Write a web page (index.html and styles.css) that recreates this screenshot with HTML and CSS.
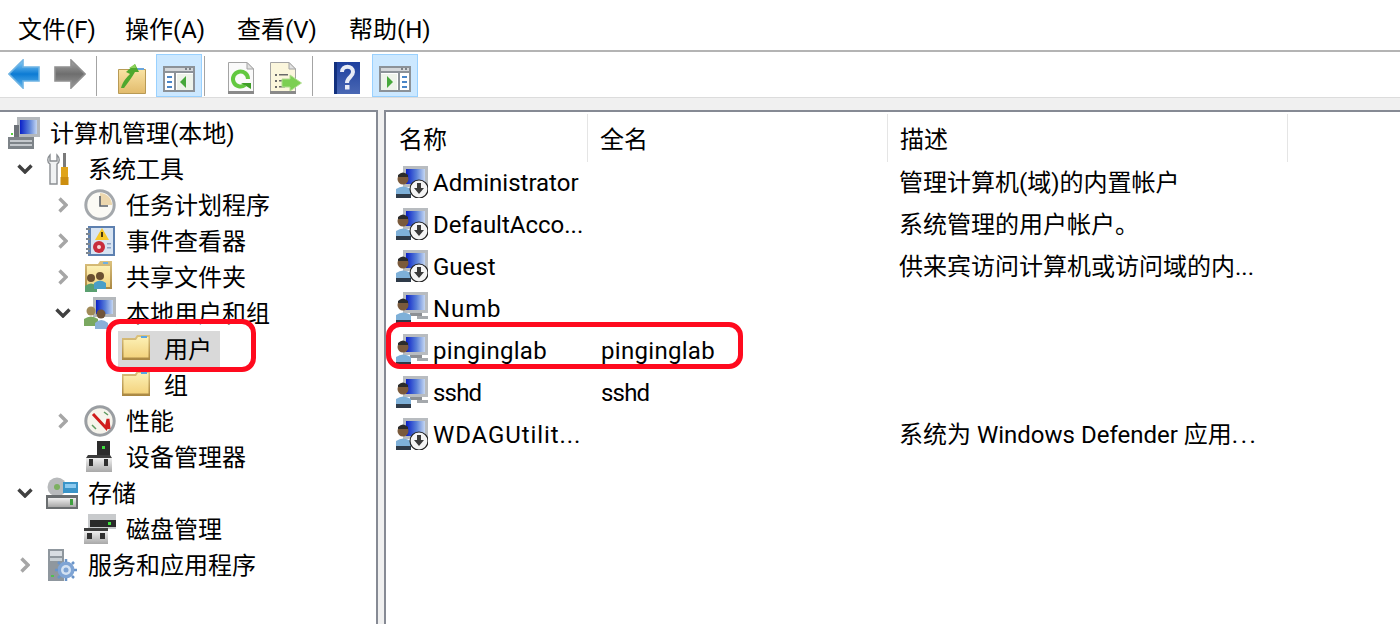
FILE: index.html
```html
<!DOCTYPE html>
<html lang="zh-CN">
<head>
<meta charset="utf-8">
<title>计算机管理</title>
<link rel="stylesheet" href="styles.css">
</head>
<body>
<svg class="sprite" xmlns="http://www.w3.org/2000/svg">
  <defs>
    <linearGradient id="gBlue" x1="0" y1="0" x2="0" y2="1"><stop offset="0" stop-color="#8fd2f8"/><stop offset=".5" stop-color="#0c7bd4"/><stop offset="1" stop-color="#62b6ec"/></linearGradient>
    <linearGradient id="gGray" x1="0" y1="0" x2="0" y2="1"><stop offset="0" stop-color="#a8a8a8"/><stop offset=".5" stop-color="#6e6e6e"/><stop offset="1" stop-color="#9a9a9a"/></linearGradient>
    <linearGradient id="gFolder" x1="0" y1="0" x2="0" y2="1"><stop offset="0" stop-color="#fcf0b5"/><stop offset="1" stop-color="#f3d37e"/></linearGradient>
    <linearGradient id="gFolderEdge" x1="0" y1="0" x2="0" y2="1"><stop offset="0" stop-color="#dcc27e"/><stop offset="1" stop-color="#a98742"/></linearGradient>
    <linearGradient id="gScreen" x1="0" y1="0" x2="1" y2="0"><stop offset="0" stop-color="#0a20c8"/><stop offset=".55" stop-color="#5a80d8"/><stop offset="1" stop-color="#c4d6f2"/></linearGradient>
    <linearGradient id="gHelp" x1="0" y1="0" x2="0" y2="1"><stop offset="0" stop-color="#1d3f9e"/><stop offset="1" stop-color="#4a68b4"/></linearGradient>
    <linearGradient id="gUpFolder" x1="0" y1="0" x2="0" y2="1"><stop offset="0" stop-color="#f9e3a4"/><stop offset="1" stop-color="#e2bb6c"/></linearGradient>
    <linearGradient id="gSilver" x1="0" y1="0" x2="0" y2="1"><stop offset="0" stop-color="#f0f0f0"/><stop offset="1" stop-color="#a8a8a8"/></linearGradient>

    <symbol id="i-back" viewBox="0 0 32 30">
      <path d="M15 1 L1 15 L15 29 V22 H31 V8 H15Z" fill="url(#gBlue)" stroke="#6fb4e4" stroke-width="1.6"/>
    </symbol>
    <symbol id="i-forward" viewBox="0 0 32 30">
      <path d="M17 1 L31 15 L17 29 V22 H1 V8 H17Z" fill="url(#gGray)" stroke="#909090" stroke-width="1.6"/>
    </symbol>
    <symbol id="i-up" viewBox="0 0 28 30">
      <path d="M0.5 5.5 H27.5 V29.5 H0.5Z" fill="url(#gUpFolder)" stroke="#b89a55"/>
      <rect x="19" y="4" width="7" height="2" fill="#6aa6dc"/>
      <path d="M3 24 C5 17 9 13 12 10 L8 8 L17 0 L21 8 L17 8 C14 13 10 19 6 24Z" fill="#4fa82e"/>
      <path d="M11 4 L17 0 L18 4Z" fill="#8ed15a"/>
    </symbol>
    <symbol id="i-panel-left" viewBox="0 0 32 26">
      <rect x="1" y="1" width="30" height="24" fill="#fff" stroke="#8c9298" stroke-width="2"/>
      <rect x="2" y="2" width="28" height="3" fill="#d4d7da"/>
      <rect x="22" y="2" width="2" height="2" fill="#7c8288"/><rect x="26" y="2" width="2" height="2" fill="#7c8288"/>
      <rect x="0" y="5" width="32" height="2" fill="#8c9298"/>
      <rect x="11" y="6" width="2" height="20" fill="#8c9298"/>
      <rect x="14" y="8" width="16" height="16" fill="#eef3ea"/>
      <rect x="4" y="10" width="5" height="2" fill="#4a86c8"/><rect x="4" y="15" width="5" height="2" fill="#4a86c8"/><rect x="4" y="20" width="5" height="2" fill="#4a86c8"/>
      <path d="M23 10 L17 16 L23 22Z" fill="#46a83a"/>
    </symbol>
    <symbol id="i-panel-right" viewBox="0 0 32 26">
      <rect x="1" y="1" width="30" height="24" fill="#fff" stroke="#8c9298" stroke-width="2"/>
      <rect x="2" y="2" width="28" height="3" fill="#d4d7da"/>
      <rect x="22" y="2" width="2" height="2" fill="#7c8288"/><rect x="26" y="2" width="2" height="2" fill="#7c8288"/>
      <rect x="0" y="5" width="32" height="2" fill="#8c9298"/>
      <rect x="19" y="6" width="2" height="20" fill="#8c9298"/>
      <rect x="2" y="8" width="16" height="16" fill="#eef3ea"/>
      <rect x="23" y="10" width="5" height="2" fill="#4a86c8"/><rect x="23" y="15" width="5" height="2" fill="#4a86c8"/><rect x="23" y="20" width="5" height="2" fill="#4a86c8"/>
      <path d="M8 10 L14 16 L8 22Z" fill="#46a83a"/>
    </symbol>
    <symbol id="i-refresh" viewBox="0 0 26 32">
      <path d="M0.5 0.5 H19 L25.5 7 V31.5 H0.5Z" fill="#fafafa" stroke="#a4a4a4"/>
      <path d="M19 0.5 V7 H25.5Z" fill="#e2e2e2" stroke="#a4a4a4"/>
      <rect x="0" y="29" width="26" height="3" fill="#8a8a8a"/>
      <path d="M17 23 A7.5 7.5 0 1 1 20 17" fill="none" stroke="#62c840" stroke-width="4"/>
      <path d="M13 21 H23 V27Z" fill="#3f9e28"/>
    </symbol>
    <symbol id="i-export" viewBox="0 0 32 32">
      <path d="M0.5 0.5 H19 L25.5 7 V31.5 H0.5Z" fill="#fbf6dc" stroke="#a4a4a4"/>
      <path d="M19 0.5 V7 H25.5Z" fill="#e2e2e2" stroke="#a4a4a4"/>
      <rect x="0" y="29" width="26" height="3" fill="#8a8a8a"/>
      <g fill="#6a6a6a"><rect x="5" y="12" width="2" height="2"/><rect x="9" y="12" width="9" height="1.5"/><rect x="5" y="18" width="2" height="2"/><rect x="9" y="18" width="7" height="1.5"/><rect x="5" y="24" width="2" height="2"/><rect x="9" y="24" width="6" height="1.5"/></g>
      <path d="M20 13 L31.5 21 L20 29 V25 H12 V17 H20Z" fill="#7ccf52" stroke="#b0dd90"/>
    </symbol>
    <symbol id="i-help" viewBox="0 0 26 32">
      <rect width="26" height="32" fill="url(#gHelp)"/>
      <rect x="0" y="0" width="3" height="32" fill="#12307e"/>
      <path d="M8 10 C8 3 19 3 19 10 C19 15 13 15 13 21" fill="none" stroke="#e8ecf6" stroke-width="4"/>
      <rect x="11" y="23" width="4.5" height="4.5" fill="#e8ecf6"/>
    </symbol>
    <symbol id="i-computer" viewBox="0 0 32 32">
      <rect x="9" y="0" width="23" height="20" fill="#b4b8bc"/>
      <rect x="12" y="3" width="17" height="14" fill="url(#gScreen)"/>
      <path d="M6 8 H11 V20 H6Z" fill="#6d7278"/>
      <rect x="3" y="16" width="2" height="2" fill="#58d040"/>
      <rect x="0" y="20" width="26" height="12" fill="#7d8388"/>
      <g fill="#c4c8cc"><rect x="2" y="23" width="22" height="2"/><rect x="2" y="27" width="22" height="2"/></g>
    </symbol>
    <symbol id="i-tools" viewBox="0 0 32 32">
      <path d="M4 2 C1 5 1 9 4 11 V31 H11 V11 C14 9 14 5 11 2 V8 H4Z" fill="#f0f2f3" stroke="#8a8e92" stroke-width="1.4"/>
      <rect x="17" y="0" width="3" height="14" fill="#7a7a7a"/>
      <rect x="15" y="14" width="7" height="10" fill="#e0a41a"/>
      <rect x="14.5" y="24" width="8" height="8" fill="#cc8e10"/>
    </symbol>
    <symbol id="i-clock" viewBox="0 0 32 32">
      <circle cx="16" cy="16" r="14.2" fill="#fbfaf5" stroke="#a4a8ac" stroke-width="3"/>
      <path d="M16 16 V4 A12 12 0 0 1 28 16Z" fill="#ecd7ae"/>
      <path d="M16 7 V17 H24" fill="none" stroke="#5a6068" stroke-width="1.6"/>
    </symbol>
    <symbol id="i-event" viewBox="0 0 32 32">
      <rect x="4" y="1" width="27" height="30" fill="#5d80b0"/>
      <rect x="7" y="3" width="22" height="26" fill="#d8e4f2"/>
      <g fill="#808890"><rect x="2" y="3" width="4" height="2"/><rect x="2" y="8" width="4" height="2"/><rect x="2" y="13" width="4" height="2"/><rect x="2" y="18" width="4" height="2"/><rect x="2" y="23" width="4" height="2"/><rect x="2" y="27" width="4" height="2"/></g>
      <path d="M18 3 L25 15 H11Z" fill="#f6c82c"/><rect x="17" y="7" width="2" height="5" fill="#4a3a10"/>
      <circle cx="15" cy="22" r="6" fill="#c82c3c"/><circle cx="15" cy="22" r="2" fill="#f8d8d8"/>
      <g fill="#8fa4c4"><rect x="23" y="18" width="4" height="1.5"/><rect x="23" y="22" width="4" height="1.5"/></g>
    </symbol>
    <symbol id="i-share" viewBox="0 0 32 32">
      <path d="M1 3 H14 L16 0 H28 V28 H1Z" fill="url(#gFolderEdge)"/>
      <rect x="3" y="5" width="23" height="21" fill="url(#gFolder)"/>
      <rect x="19" y="1" width="5" height="2" fill="#70b0e0"/>
      <circle cx="7" cy="17" r="4" fill="#6b5030"/><path d="M1 31 V25 Q7 20 13 25 V31Z" fill="#5aa070"/>
      <circle cx="16" cy="15" r="4" fill="#6b5030"/><path d="M10 28 V22 Q16 17 22 22 V28Z" fill="#4a9ec8"/>
    </symbol>
    <symbol id="i-users" viewBox="0 0 32 32">
      <rect x="9" y="0" width="23" height="20" fill="#b4b8bc"/>
      <rect x="12" y="3" width="17" height="14" fill="url(#gScreen)"/>
      <circle cx="7" cy="14" r="4.5" fill="#a08a58"/><path d="M0 29 V22 Q7 17 14 22 V29Z" fill="#7aa860"/>
      <circle cx="17" cy="17" r="4.5" fill="#70543a"/><path d="M11 32 V26 Q17 20 24 26 V32Z" fill="#8ab0d8"/>
    </symbol>
    <symbol id="i-folder" viewBox="0 0 32 32">
      <path d="M0 5 H13 L15 2 H28 V27 H0Z" fill="url(#gFolderEdge)"/>
      <path d="M1.5 7 H14 L16 4 H26.5 V24.5 H1.5Z" fill="url(#gFolder)"/>
      <rect x="19" y="3" width="6" height="2" fill="#5aa6e4"/>
    </symbol>
    <symbol id="i-perf" viewBox="0 0 32 32">
      <circle cx="16" cy="16" r="14.2" fill="#f6f4ec" stroke="#9a9ea2" stroke-width="3"/>
      <path d="M9 9 L22 23 L24 14 L25 24" fill="none" stroke="#d01c1c" stroke-width="3"/>
      <path d="M20 7 L24 10 M8 20 L12 24" stroke="#5f9a60" stroke-width="1.5"/>
    </symbol>
    <symbol id="i-device" viewBox="0 0 32 32">
      <rect x="13" y="0" width="13" height="15" fill="#2c2c2c"/>
      <rect x="18" y="5" width="3" height="3" fill="#40e040"/>
      <path d="M4 14 H26 L28 17 H2Z" fill="#3c3c3c"/>
      <rect x="2" y="17" width="26" height="14" fill="url(#gSilver)"/>
      <rect x="5" y="18" width="4" height="7" fill="#303030"/><rect x="20" y="18" width="4" height="7" fill="#303030"/>
    </symbol>
    <symbol id="i-storage" viewBox="0 0 32 32">
      <circle cx="11" cy="10" r="9.5" fill="#b8babc"/><circle cx="11" cy="10" r="3" fill="#7cb060"/>
      <rect x="17" y="5" width="15" height="11" fill="#3a94c8"/><rect x="19" y="7" width="11" height="4" fill="#8ccaf0"/>
      <rect x="0" y="18" width="32" height="14" fill="#6a6e70"/>
      <rect x="2" y="21" width="28" height="9" fill="url(#gSilver)"/>
      <rect x="24" y="22" width="3" height="6" fill="#40a040"/>
    </symbol>
    <symbol id="i-disk" viewBox="0 0 32 32">
      <path d="M4 1 H32 V16 H4Z" fill="#c8cacc"/>
      <rect x="6" y="7" width="26" height="7" fill="#2a2a2a"/><rect x="24" y="9" width="3" height="3" fill="#40e040"/>
      <rect x="0" y="15" width="24" height="3" fill="#3c3c3c"/>
      <rect x="0" y="18" width="24" height="13" fill="url(#gSilver)"/>
      <rect x="3" y="20" width="5" height="6" fill="#303030"/><rect x="16" y="20" width="5" height="6" fill="#303030"/>
    </symbol>
    <symbol id="i-services" viewBox="0 0 32 32">
      <rect x="2" y="0" width="16" height="32" fill="#8f979e"/>
      <rect x="4" y="2" width="12" height="5" fill="#d8dde2"/><rect x="4" y="9" width="12" height="3" fill="#c8cfd4"/>
      <rect x="5" y="26" width="3" height="2" fill="#50c050"/>
      <circle cx="20" cy="21" r="8.5" fill="#7fa4d4"/><circle cx="20" cy="21" r="5" fill="#d4e2f2"/><circle cx="20" cy="21" r="2.5" fill="#7fa4d4"/>
      <path d="M20 10 v3 M20 29 v3 M9 21 h3 M28 21 h3 M12 13 l2 2 M26 27 l2 2 M28 13 l-2 2 M14 27 l-2 2" stroke="#6a94c8" stroke-width="2.5"/>
    </symbol>
    <symbol id="i-user" viewBox="0 0 32 32">
      <rect x="7" y="0" width="25" height="21" fill="#b8bcc0"/>
      <rect x="10" y="3" width="19" height="15" fill="url(#gScreen)"/>
      <path d="M14 21 H26 V24 H14Z" fill="#8c9094"/>
      <path d="M21 24 H32 V27 H21Z" fill="#a4a8ac"/>
      <circle cx="7" cy="13" r="5.5" fill="#7a5a3c"/><path d="M2 9 Q7 4 12 9 V11 H2Z" fill="#2c2c2c"/>
      <path d="M0 32 V23 Q7 18 15 23 V32Z" fill="#7eb0d8"/>
      <path d="M0 28 H15 V32 H0Z" fill="#2e3a48"/>
    </symbol>
    <symbol id="i-user-off" viewBox="0 0 32 32">
      <rect x="7" y="0" width="25" height="21" fill="#b8bcc0"/>
      <rect x="10" y="3" width="19" height="15" fill="url(#gScreen)"/>
      <circle cx="7" cy="13" r="5.5" fill="#7a5a3c"/><path d="M2 9 Q7 4 12 9 V11 H2Z" fill="#2c2c2c"/>
      <path d="M0 32 V23 Q7 18 15 23 V32Z" fill="#7eb0d8"/>
      <path d="M0 28 H15 V32 H0Z" fill="#2e3a48"/>
      <circle cx="23" cy="23" r="9" fill="#f4f4f4" stroke="#222" stroke-width="1.2"/>
      <path d="M21 17 H25 V22 H28 L23 28 L18 22 H21Z" fill="#3a3a3a"/>
    </symbol>
  </defs>
</svg>

<header class="menubar">
  <span class="menu-item">文件(F)</span>
  <span class="menu-item">操作(A)</span>
  <span class="menu-item">查看(V)</span>
  <span class="menu-item">帮助(H)</span>
</header>

<nav class="toolbar">
  <span class="tool tool-arrow"><svg class="ti-arrow"><use href="#i-back"/></svg></span>
  <span class="tool tool-arrow"><svg class="ti-arrow"><use href="#i-forward"/></svg></span>
  <span class="sep"></span>
  <span class="tool tool-up"><svg class="ti-up"><use href="#i-up"/></svg></span>
  <span class="tool tool-on"><svg class="ti-panel"><use href="#i-panel-left"/></svg></span>
  <span class="sep sep-b"></span>
  <span class="tool tool-refresh"><svg class="ti-refresh"><use href="#i-refresh"/></svg></span>
  <span class="tool tool-export"><svg class="ti-export"><use href="#i-export"/></svg></span>
  <span class="sep"></span>
  <span class="tool tool-help"><svg class="ti-help"><use href="#i-help"/></svg></span>
  <span class="tool tool-on tool-last"><svg class="ti-panel"><use href="#i-panel-right"/></svg></span>
</nav>

<div class="band"></div>

<main class="panes">
  <aside class="tree">
    <div class="row lv0"><span class="slot slot-root"></span><span class="body"><svg class="ic"><use href="#i-computer"/></svg><span>计算机管理(本地)</span></span></div>
    <div class="row lv1"><span class="slot"><svg class="chev-open" viewBox="0 0 16 10"><path d="M1.5 1.5 L8 8 L14.5 1.5"/></svg></span><span class="body"><svg class="ic"><use href="#i-tools"/></svg><span>系统工具</span></span></div>
    <div class="row lv2"><span class="slot"><svg class="chev-shut" viewBox="0 0 10 16"><path d="M1.5 1.5 L8 8 L1.5 14.5"/></svg></span><span class="body"><svg class="ic"><use href="#i-clock"/></svg><span>任务计划程序</span></span></div>
    <div class="row lv2"><span class="slot"><svg class="chev-shut" viewBox="0 0 10 16"><path d="M1.5 1.5 L8 8 L1.5 14.5"/></svg></span><span class="body"><svg class="ic"><use href="#i-event"/></svg><span>事件查看器</span></span></div>
    <div class="row lv2"><span class="slot"><svg class="chev-shut" viewBox="0 0 10 16"><path d="M1.5 1.5 L8 8 L1.5 14.5"/></svg></span><span class="body"><svg class="ic"><use href="#i-share"/></svg><span>共享文件夹</span></span></div>
    <div class="row lv2"><span class="slot"><svg class="chev-open" viewBox="0 0 16 10"><path d="M1.5 1.5 L8 8 L14.5 1.5"/></svg></span><span class="body"><svg class="ic"><use href="#i-users"/></svg><span>本地用户和组</span></span></div>
    <div class="row lv3"><span class="slot"></span><span class="body body-sel"><svg class="ic"><use href="#i-folder"/></svg><span>用户</span></span></div>
    <div class="row lv3"><span class="slot"></span><span class="body"><svg class="ic"><use href="#i-folder"/></svg><span>组</span></span></div>
    <div class="row lv2"><span class="slot"><svg class="chev-shut" viewBox="0 0 10 16"><path d="M1.5 1.5 L8 8 L1.5 14.5"/></svg></span><span class="body"><svg class="ic"><use href="#i-perf"/></svg><span>性能</span></span></div>
    <div class="row lv2"><span class="slot"></span><span class="body"><svg class="ic"><use href="#i-device"/></svg><span>设备管理器</span></span></div>
    <div class="row lv1"><span class="slot"><svg class="chev-open" viewBox="0 0 16 10"><path d="M1.5 1.5 L8 8 L14.5 1.5"/></svg></span><span class="body"><svg class="ic"><use href="#i-storage"/></svg><span>存储</span></span></div>
    <div class="row lv2"><span class="slot"></span><span class="body"><svg class="ic"><use href="#i-disk"/></svg><span>磁盘管理</span></span></div>
    <div class="row lv1"><span class="slot"><svg class="chev-shut" viewBox="0 0 10 16"><path d="M1.5 1.5 L8 8 L1.5 14.5"/></svg></span><span class="body"><svg class="ic"><use href="#i-services"/></svg><span>服务和应用程序</span></span></div>
    <div class="callout callout-tree"></div>
  </aside>
  <section class="list">
    <div class="head">
      <span class="hcell">名称</span>
      <span class="hcell hcell-mid">全名</span>
      <span class="hcell hcell-last">描述</span>
    </div>
    <div class="lrow"><span class="cell-name"><svg class="ic"><use href="#i-user-off"/></svg><span>Administrator</span></span><span></span><span>管理计算机(域)的内置帐户</span></div>
    <div class="lrow"><span class="cell-name"><svg class="ic"><use href="#i-user-off"/></svg><span>DefaultAcco...</span></span><span></span><span>系统管理的用户帐户。</span></div>
    <div class="lrow"><span class="cell-name"><svg class="ic"><use href="#i-user-off"/></svg><span>Guest</span></span><span></span><span>供来宾访问计算机或访问域的内...</span></div>
    <div class="lrow"><span class="cell-name"><svg class="ic"><use href="#i-user"/></svg><span class="ls-wide">Numb</span></span><span></span><span></span></div>
    <div class="lrow"><span class="cell-name"><svg class="ic"><use href="#i-user"/></svg><span class="ls-some">pinginglab</span></span><span class="ls-some">pinginglab</span><span></span></div>
    <div class="lrow"><span class="cell-name"><svg class="ic"><use href="#i-user"/></svg><span class="ls-tight">sshd</span></span><span class="ls-tight">sshd</span><span></span></div>
    <div class="lrow"><span class="cell-name"><svg class="ic"><use href="#i-user-off"/></svg><span class="ls-wide">WDAGUtilit...</span></span><span></span><span>系统为 Windows Defender 应用<span class="dots">...</span></span></div>
    <div class="callout callout-list"></div>
  </section>
</main>
</body>
</html>
```

FILE: styles.css
```css
* { box-sizing: border-box; }
html, body { margin: 0; padding: 0; }
body {
  width: 1400px;
  height: 624px;
  overflow: hidden;
  background: #f0f0f0;
  color: #000;
  font-family: Roboto, "Noto Sans CJK SC", sans-serif;
  font-size: 24px;
  line-height: 36px;
  display: flex;
  flex-direction: column;
}
.sprite { display: block; width: 0; height: 0; overflow: hidden; }

.menubar {
  height: 52px;
  flex: none;
  background: #fff;
  border-bottom: 2px solid #b4b4b4;
  display: grid;
  grid-template-columns: 107px 112px 112px 1fr;
  align-items: center;
  padding: 10px 0 0 18px;
}

.toolbar {
  height: 46px;
  flex: none;
  background: #fff;
  border-bottom: 1px solid #dcdcdc;
  display: flex;
  align-items: flex-start;
  padding-left: 8px;
}
.tool { display: flex; align-items: center; justify-content: center; height: 44px; flex: none; }
.tool svg { display: block; flex: none; }
.tool-arrow { width: 32px; }
.tool-arrow + .tool-arrow { margin-left: 14px; }
.ti-arrow { width: 32px; height: 30px; }
.sep { width: 1px; height: 40px; margin: 4px 0 0 10px; background: #a4a4a4; flex: none; }
.sep-b { margin-left: 2px; }
.tool-up { width: 28px; margin-left: 21px; }
.ti-up { width: 28px; height: 30px; margin-top: 10px; }
.tool-on {
  width: 46px;
  height: 43px;
  margin-left: 10px;
  margin-top: 2px;
  padding-top: 11px;
  align-items: flex-start;
  background: #cce8ff;
  border: 1px solid #99d1ff;
}
.ti-panel { width: 32px; height: 26px; }
.tool-refresh { width: 26px; margin-left: 23px; }
.ti-refresh { width: 26px; height: 32px; margin-top: 8px; }
.tool-export { width: 32px; margin-left: 16px; }
.ti-export { width: 32px; height: 32px; margin-top: 8px; }
.tool-help { width: 26px; margin-left: 21px; }
.ti-help { width: 26px; height: 32px; margin-top: 8px; }
.tool-last { margin-left: 12px; }

.band { height: 12px; flex: none; background: #f0f0f0; }

.panes { flex: 1; display: flex; gap: 6px; min-height: 0; }

.tree {
  position: relative;
  width: 378px;
  flex: none;
  background: #fff;
  border-top: 2px solid #868a94;
  border-right: 2px solid #868a94;
  padding-top: 3px;
}
.row { display: flex; height: 36px; align-items: center; white-space: nowrap; }
.lv0 { padding-left: 0; }
.lv1 { padding-left: 8px; }
.lv2 { padding-left: 46px; }
.lv3 { padding-left: 84px; }
.slot { width: 34px; height: 36px; flex: none; display: flex; align-items: center; justify-content: center; }
.slot-root { width: 4px; }
.body { display: flex; align-items: center; gap: 10px; height: 36px; padding: 2px 8px 0 4px; }
.body-sel { background: #d9d9d9; }
.ic { width: 32px; height: 32px; flex: none; display: block; margin-bottom: 2px; }
.chev-open { width: 16px; height: 10px; fill: none; stroke: #404040; stroke-width: 3.4; }
.chev-shut { width: 10px; height: 16px; fill: none; stroke: #a6a6a6; stroke-width: 3.4; }

.list {
  position: relative;
  flex: 1;
  background: #fff;
  border-top: 2px solid #868a94;
  border-left: 2px solid #868a94;
}
.head { display: grid; grid-template-columns: 202px 300px 400px; height: 48px; margin: 2px 0 -1px; }
.hcell { display: flex; align-items: center; padding: 4px 0 0 13px; border-right: 1px solid #e5e5e5; }
.hcell-mid { padding-left: 12px; }
.hcell-last { padding-left: 12px; }
.lrow {
  display: grid;
  grid-template-columns: 215px 298px 1fr;
  height: 42px;
  padding-top: 2px;
  align-items: center;
  white-space: nowrap;
}
.cell-name { display: flex; align-items: center; gap: 5px; padding-left: 10px; }
.ls-wide { letter-spacing: 0.9px; }
.ls-some { letter-spacing: 0.3px; }
.ls-tight { letter-spacing: -0.8px; }
.dots { letter-spacing: 2.5px; }

.callout {
  position: absolute;
  border: 5px solid #ff0a1e;
  border-radius: 14px;
  pointer-events: none;
}
.callout-tree { left: 106px; top: 207px; width: 150px; height: 53px; }
.callout-list { left: 0; top: 210px; width: 357px; height: 47px; }
```
